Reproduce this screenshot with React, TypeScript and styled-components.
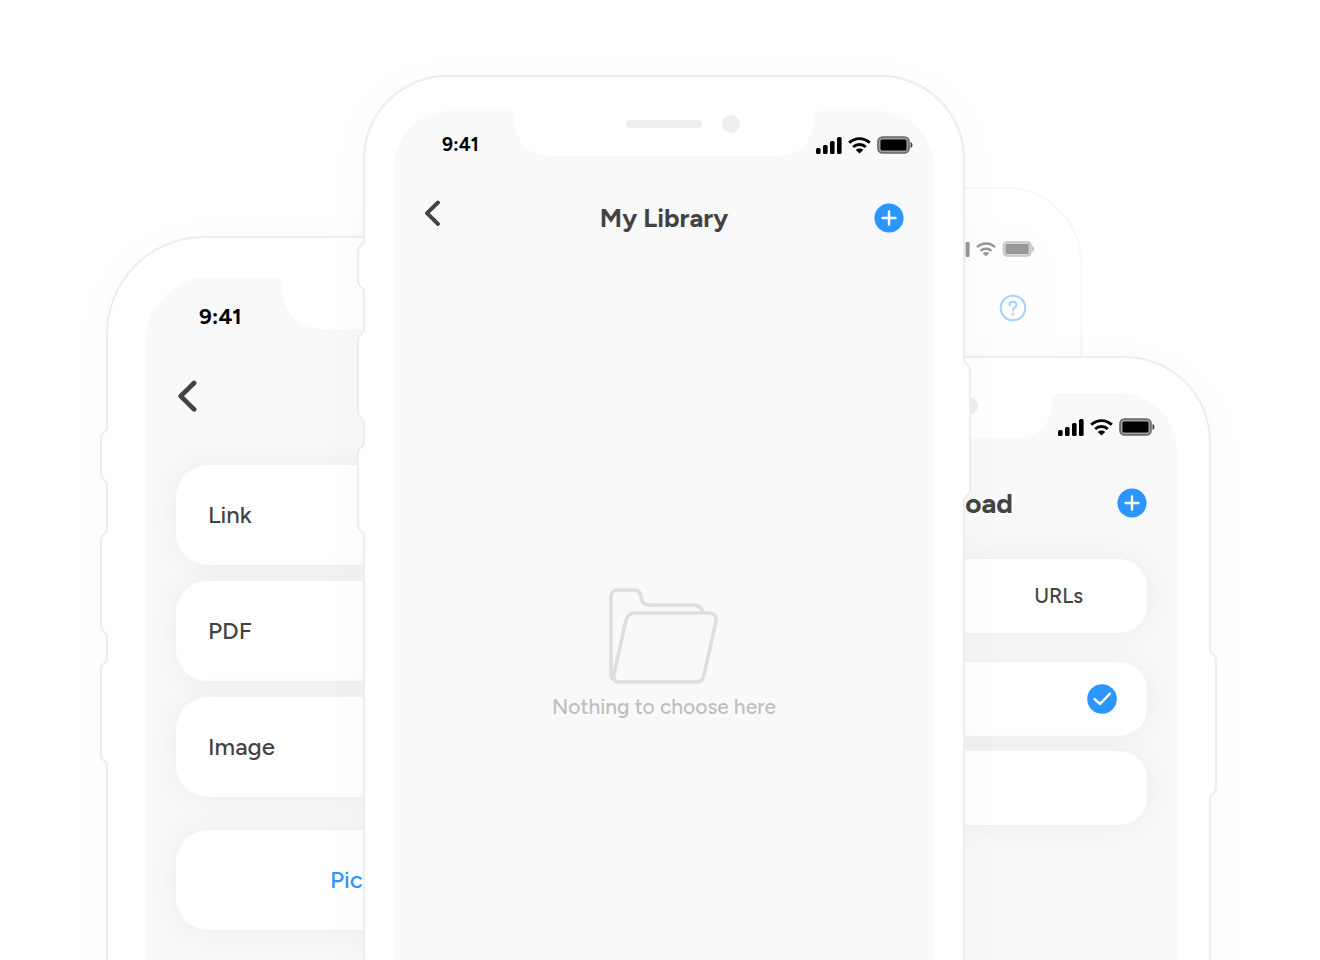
import React from "react";
import styled, { createGlobalStyle } from "styled-components";

const GlobalStyle = createGlobalStyle`
  *, *::before, *::after { box-sizing: border-box; }
  body {
    margin: 0;
    background: #fff;
    color: #434343;
    font-family: Figtree, Lato, "Open Sans", sans-serif;
  }
  h2, p { margin: 0; }
  button { border: 0; padding: 0; background: none; font: inherit; color: inherit; display: flex; cursor: pointer; }
  svg { display: block; flex: none; }
`;

const Stage = styled.main`
  position: relative;
  min-height: 100vh;
  overflow: hidden;
`;

/* Phones overlap freely on the stage; x is measured from its middle. */
const Phone = styled.section<{ $x: number; $y: number; $w: number; $top: number; $side: number; $radius: number; $z: number; $faded?: boolean }>`
  position: absolute;
  left: calc(50% + ${(p) => p.$x}px);
  top: ${(p) => p.$y}px;
  bottom: -200px;
  width: ${(p) => p.$w}px;
  z-index: ${(p) => p.$z};
  padding: ${(p) => p.$top}px ${(p) => p.$side}px 0;
  border: 2px solid ${(p) => (p.$faded ? "#f7f7f7" : "#ededed")};
  border-radius: ${(p) => p.$radius}px;
  background: #fff;
  box-shadow: ${(p) => (p.$faded ? "none" : "0 8px 60px rgba(0, 0, 0, 0.025)")};
`;

const Screen = styled.div<{ $radius: number; $faded?: boolean }>`
  position: relative;
  height: 100%;
  background: ${(p) => (p.$faded ? "#fefefe" : "#f9f9f9")};
  border-radius: ${(p) => p.$radius}px ${(p) => p.$radius}px 0 0;
`;

const NotchShape = styled.svg`
  position: absolute;
  top: -1px;
  left: 50%;
  transform: translateX(-50%);
`;

const SideKey = styled.svg<{ $side: "left" | "right"; $y: number }>`
  position: absolute;
  top: ${(p) => p.$y}px;
  ${(p) => p.$side}: -8px;
  ${(p) => (p.$side === "right" ? "transform: scaleX(-1);" : "")}
`;

const StatusBar = styled.div<{ $pad: string }>`
  position: relative;
  display: flex;
  align-items: center;
  justify-content: space-between;
  padding: ${(p) => p.$pad};
`;

const Clock = styled.time<{ $size: number }>`
  font-size: ${(p) => p.$size}px;
  line-height: 24px;
  font-weight: 700;
  color: #000;
`;

const StatusIcons = styled.div<{ $faded?: boolean }>`
  display: flex;
  align-items: center;
  gap: 6px;
  margin-left: auto;
  opacity: ${(p) => (p.$faded ? 0.4 : 1)};
`;

const NavBar = styled.header<{ $pad: string }>`
  display: grid;
  grid-template-columns: 1fr auto 1fr;
  align-items: center;
  padding: ${(p) => p.$pad};
`;

const EndNavBar = styled(NavBar)`
  grid-template-columns: 1fr auto;
`;

const Title = styled.h2`
  font-size: 26px;
  line-height: 36px;
  font-weight: 700;
`;

const EdgeTitle = styled(Title)`
  padding-right: 104px;
  font-size: 28px;
  text-align: right;
`;

const BackButton = styled.button`
  align-self: flex-start;
  justify-self: start;
`;

const AddButton = styled.button`
  justify-self: end;
`;

const CardList = styled.div<{ $pad: string; $gap: number }>`
  display: flex;
  flex-direction: column;
  gap: ${(p) => p.$gap}px;
  padding: ${(p) => p.$pad};
`;

const Card = styled.button<{ $h: number; $gapAbove?: number; $end?: boolean; $accent?: boolean }>`
  width: 100%;
  height: ${(p) => p.$h}px;
  margin-top: ${(p) => p.$gapAbove ?? 0}px;
  padding: ${(p) => (p.$accent ? "0 154px" : p.$end ? "0 30px" : "0 32px")};
  align-items: center;
  justify-content: ${(p) => (p.$end ? "flex-end" : "flex-start")};
  border-radius: ${(p) => (p.$h > 90 ? 32 : 28)}px;
  background: #fff;
  box-shadow: 0 0 32px rgba(0, 0, 0, 0.06);
  color: ${(p) => (p.$accent ? "#2d95ff" : "#434343")};
  font-size: 24px;
  line-height: 32px;
  font-weight: 500;
`;

const TabCard = styled(Card)`
  padding-right: 64px;
  font-size: 21px;
`;

const Empty = styled.div`
  display: flex;
  flex-direction: column;
  align-items: center;
  gap: 9px;
  padding-top: 352px;
  color: #bfbfbf;
  font-size: 21px;
  line-height: 28px;
  font-weight: 500;
`;

const HelpRow = styled.div`
  display: flex;
  justify-content: flex-end;
  padding: 37px 27px 0 0;
`;

function Notch({ scale = 1 }: { scale?: number }) {
  return (
    <NotchShape width={316 * scale} height={46 * scale} viewBox="0 0 316 46" aria-hidden="true">
      <path d="M0 0H316V1C309 1 308 4 308 9C308 29 296 46 272 46H44C20 46 8 29 8 9C8 4 7 1 0 1Z" fill="#fff" />
      <rect x="120" y="10" width="76" height="8" rx="4" fill="#ededf2" />
      <circle cx="225" cy="14" r="9" fill="#ededf2" />
    </NotchShape>
  );
}

function Key({ side = "left", y, h }: { side?: "left" | "right"; y: number; h: number }) {
  return (
    <SideKey $side={side} $y={y} width="9" height={h} aria-hidden="true">
      <path d={`M9 0H7C7 5 1 3 1 10V${h - 10}C1 ${h - 3} 7 ${h - 5} 7 ${h}H9Z`} fill="#fff" />
      <path
        d={`M7 0C7 5 1 3 1 10V${h - 10}C1 ${h - 3} 7 ${h - 5} 7 ${h}`}
        fill="none"
        stroke="#ededed"
        strokeWidth="2"
      />
    </SideKey>
  );
}

function Signal({ faded }: { faded?: boolean }) {
  return (
    <StatusIcons $faded={faded}>
      <svg width={faded ? 23 : 26} height={faded ? 15 : 17} viewBox="0 0 26 17" aria-hidden="true">
        <rect x="0" y="11" width="4.6" height="6" rx="1.5" />
        <rect x="7" y="8" width="4.6" height="9" rx="1.5" />
        <rect x="14" y="4" width="4.6" height="13" rx="1.5" />
        <rect x="21" y="0" width="4.6" height="17" rx="1.5" />
      </svg>
      <svg width={faded ? 20 : 23} height={faded ? 15 : 17} viewBox="0 0 23 17" fill="none" stroke="#000" strokeWidth="2.9" aria-hidden="true">
        <path d="M1.2 5.8C7 .2 16 .2 21.8 5.8" />
        <path d="M5.2 10C8.7 6.7 14.3 6.7 17.8 10" />
        <path d="M7.8 12.9C10 11 13 11 15.2 12.9L11.5 16.5Z" fill="#000" stroke="none" />
      </svg>
      <svg width={faded ? 33 : 36} height={faded ? 16 : 18} viewBox="0 0 36 18" aria-hidden="true">
        <rect x="1" y="1" width="31" height="16" rx="4.5" fill={faded ? "#999" : "#a0a0a0"} stroke="#666" strokeWidth="1.6" />
        <rect x="3.5" y="3.5" width="26" height="11" rx="1.5" />
        <path d="M33.5 6C36.2 7 36.2 11 33.5 12Z" fill="#444" />
      </svg>
    </StatusIcons>
  );
}

function Back({ size }: { size: number }) {
  return (
    <BackButton type="button" aria-label="Back">
      <svg width={(size * 2) / 3} height={size} viewBox="0 0 18 27" fill="none" stroke="#434343" strokeWidth="3.9" strokeLinecap="round" strokeLinejoin="round">
        <path d="M14 2.5L3 13.2L14 24" />
      </svg>
    </BackButton>
  );
}

function Add() {
  return (
    <AddButton type="button" aria-label="Add">
      <svg width="30" height="30" viewBox="0 0 30 30">
        <circle cx="15" cy="15" r="14.6" fill="#2d95ff" />
        <path d="M15 8.5V21.5M8.5 15H21.5" stroke="#fff" strokeWidth="2.4" strokeLinecap="round" />
      </svg>
    </AddButton>
  );
}

export default function App() {
  return (
    <>
      <GlobalStyle />
      <Stage>
        <Phone $x={-94} $y={187} $w={516} $top={30} $side={26} $radius={76} $z={1} $faded>
          <Screen $radius={50} $faded>
            <StatusBar $pad="22px 19px 0 0">
              <Signal faded />
            </StatusBar>
            <HelpRow>
              <button type="button" aria-label="Help">
                <svg width="28" height="28" viewBox="0 0 28 28" fill="none" stroke="#a6d2ff" strokeWidth="2" strokeLinecap="round">
                  <circle cx="14" cy="14" r="12.3" />
                  <path d="M10.5 11C10.5 6.8 17.5 6.8 17.5 11C17.5 13.6 14 13.2 14 16.5" />
                  <circle cx="14" cy="20" r=".6" />
                </svg>
              </button>
            </HelpRow>
          </Screen>
        </Phone>

        <Phone $x={-554} $y={236} $w={700} $top={39} $side={37} $radius={98} $z={2}>
          <Key y={190} h={56} />
          <Key y={292} h={106} />
          <Key y={421} h={106} />
          <Screen $radius={66}>
            <Notch scale={1.16} />
            <StatusBar $pad="28px 54px 0">
              <Clock $size={22}>9:41</Clock>
            </StatusBar>
            <NavBar $pad="51px 32px 0">
              <Back size={33} />
            </NavBar>
            <CardList $pad="52px 31px 0" $gap={16}>
              <Card type="button" $h={100}>Link</Card>
              <Card type="button" $h={100}>PDF</Card>
              <Card type="button" $h={100}>Image</Card>
              <Card type="button" $h={100} $gapAbove={17} $accent>Pic</Card>
            </CardList>
          </Screen>
        </Phone>

        <Phone $x={-68} $y={356} $w={619} $top={35} $side={32} $radius={86} $z={2}>
          <Key side="right" y={292} h={148} />
          <Screen $radius={58}>
            <Notch />
            <StatusBar $pad="25px 22px 0">
              <Signal />
            </StatusBar>
            <EndNavBar $pad="49px 30px 0">
              <EdgeTitle>oad</EdgeTitle>
              <Add />
            </EndNavBar>
            <CardList $pad="38px 30px 0" $gap={15}>
              <TabCard type="button" $h={74} $end>URLs</TabCard>
              <Card type="button" $h={74} $gapAbove={14} $end aria-label="Selected item">
                <svg width="30" height="30" viewBox="0 0 30 30">
                  <circle cx="15" cy="15" r="14.8" fill="#2d95ff" />
                  <path d="M7.5 15L13 20L23 9.5" fill="none" stroke="#fff" strokeWidth="2.4" strokeLinecap="round" strokeLinejoin="round" />
                </svg>
              </Card>
              <Card type="button" $h={74} aria-label="Item" />
            </CardList>
          </Screen>
        </Phone>

        <Phone $x={-297} $y={75} $w={602} $top={34} $side={29} $radius={84} $z={3}>
          <Key y={164} h={50} />
          <Key y={253} h={92} />
          <Key y={366} h={92} />
          <Key side="right" y={283} h={140} />
          <Screen $radius={56}>
            <Notch />
            <StatusBar $pad="22px 21px 0 48px">
              <Clock $size={19}>9:41</Clock>
              <Signal />
            </StatusBar>
            <NavBar $pad="43px 30px 0">
              <Back size={27} />
              <Title>My Library</Title>
              <Add />
            </NavBar>
            <Empty>
              <svg width="110" height="96" viewBox="0 0 110 96" fill="none" stroke="#dedede" strokeWidth="3.6" strokeLinejoin="round">
                <path d="M4 92Q2 90 2 86V9Q2 2 9 2H24C31 2 32 6 32 9C32 13 35 17 40 17H84Q92 17 94 25" />
                <path d="M26 25H100C105 25 108 28 107 33L95 87Q94 94 87 94H10Q4 94 5 86L17 32Q19 25 26 25Z" />
              </svg>
              <p>Nothing to choose here</p>
            </Empty>
          </Screen>
        </Phone>
      </Stage>
    </>
  );
}
